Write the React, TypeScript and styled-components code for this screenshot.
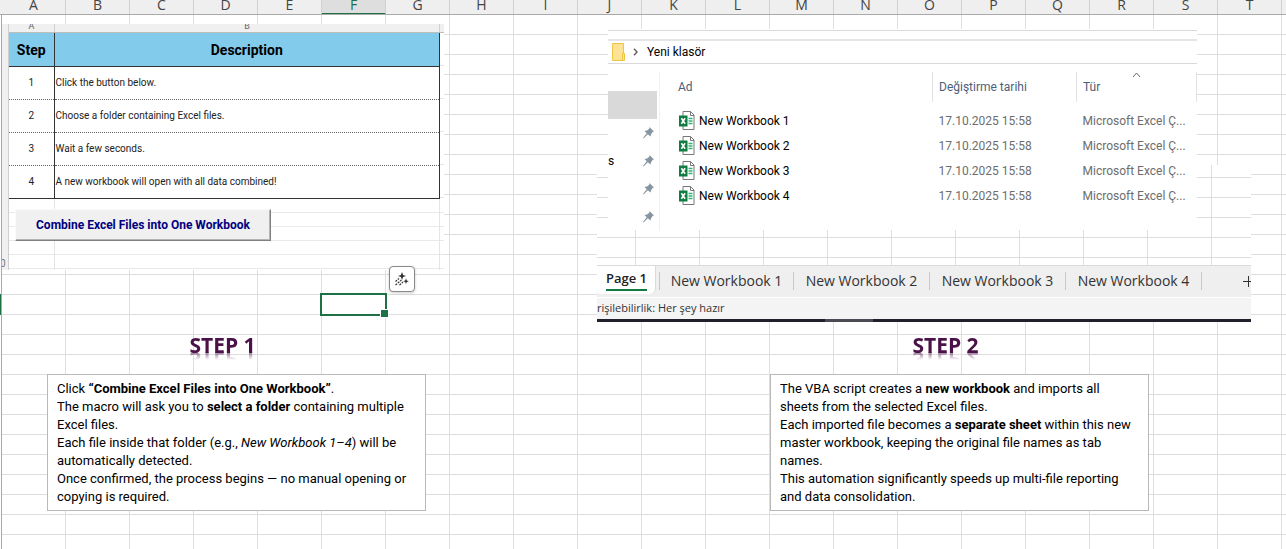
import React from 'react';
import styled, { createGlobalStyle, css } from 'styled-components';

const GlobalStyle = createGlobalStyle`
  * { box-sizing: border-box; }
  body { margin: 0; background: #fff; color: #000; font-family: "Open Sans", "Noto Sans", sans-serif; }
  button { font: inherit; }
`;

const line = '#dedede';
const green = '#1e7145';
const aptos = 'Roboto, "Open Sans", sans-serif';
const segoe = '"Open Sans", "Noto Sans", sans-serif';

const gridLines = css`
  background-color: #fff;
  background-image:
    linear-gradient(to right, transparent 63px, ${line} 63px),
    linear-gradient(to bottom, transparent 19px, ${line} 19px);
  background-size: 64px 20px;
`;

const Page = styled.div`
  min-height: 100vh;
  display: flex;
  flex-direction: column;
  overflow: hidden;
`;

/* ---- column letters ---- */
const ColumnBar = styled.header`
  display: flex;
  height: 15px;
  padding-left: 2px;
  overflow: hidden;
  background: #efefef;
  border-bottom: 1px solid #a9a9a9;
`;

const ColumnLetter = styled.div<{ $selected?: boolean }>`
  flex: 0 0 64px;
  height: ${p => (p.$selected ? '15px' : '14px')};
  border-right: 1px solid #d0d0d0;
  background: ${p => (p.$selected ? '#dedede' : 'transparent')};
  border-bottom: ${p => (p.$selected ? `2px solid ${green}` : 'none')};
  color: ${p => (p.$selected ? green : '#444')};
  font: 14px/10px ${segoe};
  text-align: center;
`;

/* ---- sheet ---- */
const SheetRow = styled.div`
  flex: 1;
  display: flex;
`;

const RowGutter = styled.div`
  flex: 0 0 2px;
  border-right: 1px solid #a9a9a9;
  background: linear-gradient(${green}, ${green}) 0 279px / 2px 21px no-repeat #fff;
`;

const Sheet = styled.main`
  ${gridLines}
  position: relative;
  flex: 1;
  min-width: 0;
  display: grid;
  grid-template-columns: minmax(0, 442fr) minmax(0, 153fr) minmax(0, 654fr) minmax(0, 35fr);
  grid-template-rows: auto auto;
  align-content: start;
`;

const SelectedCell = styled.div`
  position: absolute;
  left: 318px;
  top: 278px;
  width: 67px;
  height: 23px;
  border: 2px solid ${green};
  &::after {
    content: "";
    position: absolute;
    right: -4px;
    bottom: -4px;
    width: 7px;
    height: 7px;
    background: ${green};
    border: 1px solid #fff;
  }
`;

const QuickButton = styled.button`
  position: absolute;
  left: 387px;
  top: 251px;
  width: 26px;
  height: 26px;
  padding: 0;
  display: grid;
  place-items: center;
  background: #fff;
  border: 1px solid #8a8a8a;
  border-radius: 4px;
  box-shadow: 0 1px 3px rgba(0, 0, 0, 0.2);
`;

/* ---- left picture ---- */
const MacroPicture = styled.section`
  grid-column: 1;
  align-self: start;
  margin-top: 9px;
  display: flex;
  background: #fff;
`;

const MiniRowNumbers = styled.div`
  flex: 0 0 7px;
  display: flex;
  align-items: flex-end;
  overflow: hidden;
  background: #f0f0f0;
  border-right: 1px solid #cfcfcf;
  color: #777;
  font: 10px/12px ${aptos};
  text-indent: -2px;
`;

const MiniBody = styled.div`
  flex: 1;
  min-width: 0;
`;

const MiniLetters = styled.div`
  display: flex;
  height: 9px;
  overflow: hidden;
  background: #f0f0f0;
  border-bottom: 1px solid #bdbdbd;
  color: #666;
  font: 9px/5px ${aptos};
  text-align: center;
  span:first-child { flex: 0 0 46px; border-right: 1px solid #d0d0d0; }
  span:last-child { flex: 1; margin-right: 4px; border-right: 1px solid #d0d0d0; }
`;

const TableArea = styled.div`
  padding-right: 4px;
  background: repeating-linear-gradient(transparent 0 32px, #e6e6e6 32px 33px);
`;

const StepTable = styled.table`
  width: 100%;
  table-layout: fixed;
  border-collapse: collapse;
  background: #fff;
  font: 10px/14px ${aptos};
  color: #222;
  th, td { height: 33px; padding: 1px 1px 0; border-right: 1px solid #333; }
  th { background: #83cbeb; color: #000; font: bold 14px/16px ${aptos}; border-bottom: 1px solid #333; }
  th:first-child { width: 45px; }
  td { border-bottom: 1px dotted #666; text-align: left; }
  td:first-child { text-align: center; }
  tr:last-child td { border-bottom: 1px solid #333; }
`;

const MacroArea = styled.div`
  height: 71px;
  padding: 10px 0 0 6px;
  background:
    linear-gradient(#e4e4e4, #e4e4e4) 45px 0 / 1px 100% no-repeat,
    linear-gradient(#e4e4e4, #e4e4e4) calc(100% - 4px) 0 / 1px 100% no-repeat,
    repeating-linear-gradient(transparent 0 13px, #e9e9e9 13px 14px);
`;

const MacroButton = styled.button`
  width: 256px;
  height: 32px;
  padding: 0;
  background: #f0f0f0;
  border: 1px solid #fafafa;
  border-right: 1px solid #808080;
  border-bottom: 1px solid #808080;
  box-shadow: inset -1px -1px #b4b4b4;
  color: #000080;
  font: bold 12px/16px ${aptos};
`;

/* ---- right pictures ---- */
const ResultPictures = styled.section`
  grid-column: 3;
  margin-top: 14px;
  display: grid;
  grid-template-columns: 11px minmax(0, 1fr) 54px;
  grid-template-rows: 136px 65px auto;
`;

const WorkbookPicture = styled.div`
  grid-area: 2 / 1 / 4 / 4;
  padding-top: 100px;
  ${gridLines}
  background-position: 39px 13px;
  overflow: hidden;
`;

const TabStrip = styled.nav`
  display: flex;
  height: 32px;
  background: #efefef;
  border-top: 1px solid #dadada;
  overflow: hidden;
`;

const ActiveTab = styled.button`
  flex: 0 0 59px;
  height: 28px;
  margin-right: 3px;
  padding: 0 0 0 9px;
  display: flex;
  align-items: flex-start;
  background: #fff;
  border: 0;
  border-right: 1px solid #dadada;
  border-radius: 0 0 6px 4px;
  color: #222;
  font: 600 13px/24px ${segoe};
  span { height: 25px; border-bottom: 2px solid #107c41; white-space: nowrap; }
`;

const SheetTab = styled.button`
  flex: 0 0 136px;
  height: 18px;
  margin-top: 6px;
  padding: 0;
  background: none;
  border: 0;
  border-right: 1px solid #c8c8c8;
  color: #333;
  font: 14px/18px ${segoe};
  text-align: center;
  white-space: nowrap;
  &:nth-child(2) { flex-basis: 135px; border-left: 1px solid #c8c8c8; }
`;

const AddTab = styled.button`
  flex: 0 0 15px;
  height: 30px;
  margin-left: auto;
  padding: 0 0 0 6px;
  background: none;
  border: 0;
  overflow: hidden;
  svg { display: block; }
`;

const StatusBar = styled.footer`
  height: 22px;
  display: flex;
  overflow: hidden;
  background: #f4f4f4;
  border-top: 1px solid #fff;
  color: #333;
  font: 11px/20px ${segoe};
`;

const Taskbar = styled.div`
  height: 3px;
  background: linear-gradient(#4d4952, #4d4952) 228px 0 / 48px 3px no-repeat #211f2b;
`;

const Explorer = styled.div`
  grid-area: 1 / 2 / 3 / 3;
  display: flex;
  flex-direction: column;
  background: #fff;
  font: 12px/18px ${aptos};
`;

const RibbonEdge = styled.div`
  height: 11px;
  margin-top: 1px;
  flex: none;
  border-top: 1px solid #d9d9d9;
  border-bottom: 2px solid #e5e5e5;
`;

const PathBar = styled.div`
  flex: none;
  height: 23px;
  display: flex;
  align-items: center;
  padding-left: 3px;
  border-bottom: 1px solid #d9d9d9;
  svg + svg { margin: 0 9px 0 7px; }
`;

const ExplorerBody = styled.div`
  flex: 1;
  display: flex;
  margin-top: 8px;
`;

const QuickAccess = styled.div`
  flex: 0 0 52px;
  padding-top: 19px;
  border-right: 1px solid #f0f0f0;
`;

const PinRow = styled.div<{ $active?: boolean }>`
  height: 28px;
  width: 49px;
  display: flex;
  align-items: center;
  background: ${p => (p.$active ? '#d9d9d9' : 'none')};
  svg { margin: 0 3px 0 auto; }
`;

const FileTable = styled.table`
  width: 100%;
  align-self: flex-start;
  table-layout: fixed;
  border-collapse: collapse;
  color: #6d6d6d;
  th, td { padding: 0 0 0 6px; text-align: left; font-weight: normal; white-space: nowrap; }
  th { position: relative; height: 30px; color: #4c607a; border-right: 1px solid #e2e2e2; }
  th:first-child, td:first-child { padding-left: 18px; }
  th:nth-child(2) { width: 144px; }
  th:nth-child(3) { width: 120px; }
  td { height: 25px; }
  thead::after { content: ""; display: block; height: 6px; }
`;

const FileName = styled.span`
  display: flex;
  align-items: center;
  gap: 4px;
  color: #000;
`;

const SortMark = styled.svg`
  position: absolute;
  left: 55px;
  top: 0;
`;

/* ---- captions ---- */
const StepBlock = styled.article<{ $column: number; $indent: number }>`
  grid-column: ${p => p.$column};
  width: 379px;
  margin: 9px 0 16px ${p => p.$indent}px;
`;

const StepTitle = styled.h2`
  margin: 0 0 15px;
  padding-right: 28px;
  color: #4a1248;
  font: bold 21px/28px "Open Sans", sans-serif;
  text-align: center;
  -webkit-box-reflect: below -13px linear-gradient(transparent 50%, rgba(0, 0, 0, 0.6) 80%);
`;

const Note = styled.div`
  padding: 5px 9px 4px;
  background: #fff;
  border: 1px solid #b9b9b9;
  font: 13px/18px ${aptos};
  p { margin: 0; }
`;

const files = ['New Workbook 1', 'New Workbook 2', 'New Workbook 3', 'New Workbook 4'];
const steps = [
  'Click the button below.',
  'Choose a folder containing Excel files.',
  'Wait a few seconds.',
  'A new workbook will open with all data combined!',
];

const ExcelIcon = () => (
  <svg width="17" height="19" viewBox="0 0 17 19" aria-hidden="true">
    <path d="M5 .5h7.500l3.500 3.500v14.500H5z" fill="#fff" stroke="#777" />
    <path d="M12.500 .5v4h3.500" fill="none" stroke="#777" />
    <path d="M10.500 7.500h4M10.500 10h4M10.500 12.500h4" stroke="#33b575" strokeWidth="1.300" />
    <rect x="1" y="4.500" width="8.500" height="11" fill="#107c41" />
    <path d="M3.400 7.200l3.700 5.600M7.100 7.200l-3.700 5.600" stroke="#fff" strokeWidth="1.600" />
  </svg>
);

const PinIcon = () => (
  <svg width="11" height="12" viewBox="0 0 11 12" aria-hidden="true">
    <path d="M6.500 0L11 4.500L9.500 5L8 7.500L7.500 9.500L4.800 7.200L.5 11.500L0 11L3.700 6.200L1.500 4L4 3.600L6.300 1.800Z" fill="#8795a0" />
  </svg>
);

export default function App() {
  return (
    <Page>
      <GlobalStyle />
      <ColumnBar>
        {'ABCDEFGHIJKLMNOPQRST'.split('').map(c => (
          <ColumnLetter key={c} $selected={c === 'F'}>{c}</ColumnLetter>
        ))}
      </ColumnBar>
      <SheetRow>
        <RowGutter />
        <Sheet>
          <MacroPicture>
            <MiniRowNumbers>0</MiniRowNumbers>
            <MiniBody>
              <MiniLetters><span>A</span><span>B</span></MiniLetters>
              <TableArea>
                <StepTable>
                  <thead><tr><th>Step</th><th>Description</th></tr></thead>
                  <tbody>
                    {steps.map((s, i) => (
                      <tr key={s}><td>{i + 1}</td><td>{s}</td></tr>
                    ))}
                  </tbody>
                </StepTable>
              </TableArea>
              <MacroArea>
                <MacroButton>Combine Excel Files into One Workbook</MacroButton>
              </MacroArea>
            </MiniBody>
          </MacroPicture>

          <ResultPictures>
            <WorkbookPicture>
              <TabStrip>
                <ActiveTab><span>Page 1</span></ActiveTab>
                {files.map(f => <SheetTab key={f}>{f}</SheetTab>)}
                <AddTab aria-label="New sheet">
                  <svg width="12" height="30" viewBox="0 0 12 30"><path d="M1 15.500h11M6.500 10v11" stroke="#333" fill="none" /></svg>
                </AddTab>
              </TabStrip>
              <StatusBar>rişilebilirlik: Her şey hazır</StatusBar>
              <Taskbar />
            </WorkbookPicture>
            <Explorer>
              <RibbonEdge />
              <PathBar>
                <svg width="15" height="20" viewBox="0 0 15 20" aria-hidden="true">
                  <path d="M1.500 1.500h11v10h1v7h-12z" fill="#ffe394" stroke="#eec643" />
                  <path d="M11.500 18v-6.500h2" fill="none" stroke="#eec643" />
                </svg>
                <svg width="5" height="8" viewBox="0 0 5 8" aria-hidden="true"><path d="M1 .8l3 3.200l-3 3.200" fill="none" stroke="#666" strokeWidth="1.500" /></svg>
                Yeni klasör
              </PathBar>
              <ExplorerBody>
                <QuickAccess>
                  <PinRow $active />
                  <PinRow><PinIcon /></PinRow>
                  <PinRow>s<PinIcon /></PinRow>
                  <PinRow><PinIcon /></PinRow>
                  <PinRow><PinIcon /></PinRow>
                </QuickAccess>
                <FileTable>
                  <thead>
                    <tr>
                      <th>Ad</th>
                      <th>Değiştirme tarihi</th>
                      <th>
                        Tür
                        <SortMark width="9" height="6" viewBox="0 0 9 6" aria-hidden="true"><path d="M1 5l3.500-4l3.500 4" fill="none" stroke="#666" /></SortMark>
                      </th>
                    </tr>
                  </thead>
                  <tbody>
                    {files.map(f => (
                      <tr key={f}>
                        <td><FileName><ExcelIcon />{f}</FileName></td>
                        <td>17.10.2025 15:58</td>
                        <td>Microsoft Excel Ç...</td>
                      </tr>
                    ))}
                  </tbody>
                </FileTable>
              </ExplorerBody>
            </Explorer>
          </ResultPictures>

          <StepBlock $column={1} $indent={45}>
            <StepTitle>STEP 1</StepTitle>
            <Note>
              <p>Click <b>“Combine Excel Files into One Workbook”</b>.</p>
              <p>The macro will ask you to <b>select a folder</b> containing multiple Excel files.</p>
              <p>Each file inside that folder (e.g., <i>New Workbook 1–4</i>) will be automatically detected.</p>
              <p>Once confirmed, the process begins — no manual opening or copying is required.</p>
            </Note>
          </StepBlock>
          <StepBlock $column={3} $indent={173}>
            <StepTitle>STEP 2</StepTitle>
            <Note>
              <p>The VBA script creates a <b>new workbook</b> and imports all sheets from the selected Excel files.</p>
              <p>Each imported file becomes a <b>separate sheet</b> within this new master workbook, keeping the original file names as tab names.</p>
              <p>This automation significantly speeds up multi-file reporting and data consolidation.</p>
            </Note>
          </StepBlock>

          <SelectedCell />
          <QuickButton aria-label="Quick analysis">
            <svg width="16" height="16" viewBox="0 0 16 16" aria-hidden="true">
              <path d="M8 1l1.100 2.900l2.900 1.100l-2.900 1.100l-1.100 2.900l-1.100-2.900l-2.900-1.100l2.900-1.100zM12 7.500l.8 2l2 .8l-2 .8l-.8 2l-.8-2l-2-.8l2-.8z" fill="#333" />
              <path d="M1.500 10.500l3.500-3M1.500 14l6-5M5.500 14l3.500-3" stroke="#333" strokeWidth="1.200" strokeDasharray="2 1" />
            </svg>
          </QuickButton>
        </Sheet>
      </SheetRow>
    </Page>
  );
}
